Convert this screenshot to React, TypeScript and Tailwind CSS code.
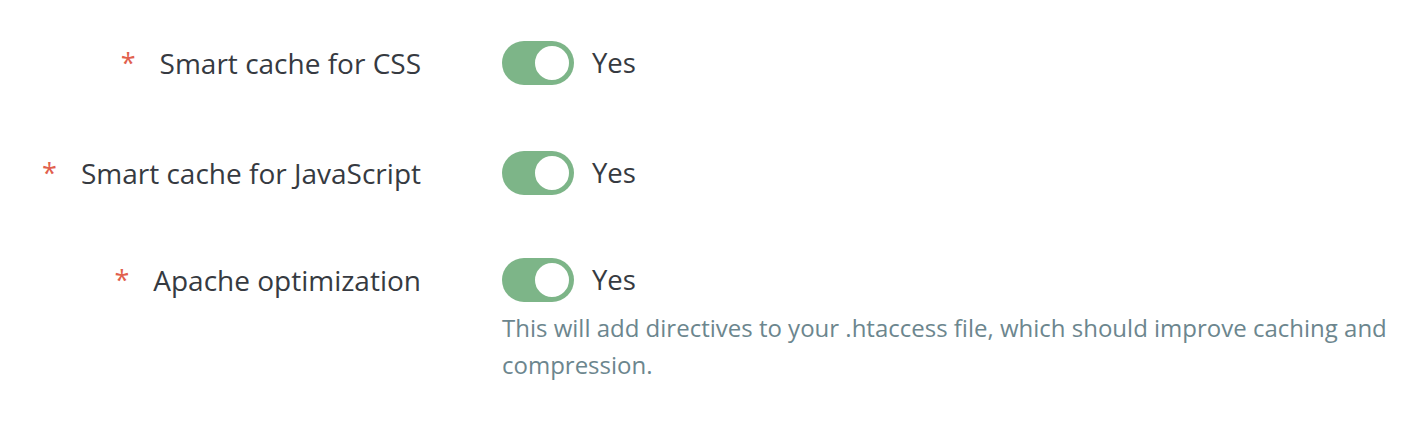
import React from 'react';

const rows = [
  { label: 'Smart cache for CSS', mb: 'mb-[66px]' },
  { label: 'Smart cache for JavaScript', mb: 'mb-[63px]' },
  {
    label: 'Apache optimization',
    mb: '',
    help: 'This will add directives to your .htaccess file, which should improve caching and compression.',
  },
];

const Toggle: React.FC = () => (
  <div className="relative w-[72px] h-[44px] rounded-full bg-[#7db588] shrink-0">
    <div className="absolute right-[2px] top-[2px] w-[40px] h-[40px] rounded-full bg-white border-[3px] border-[#7db588]" />
  </div>
);

export default function App() {
  return (
    <div
      className="w-[1424px] h-[424px] bg-white pt-[41px]"
      style={{ fontFamily: '"Open Sans", "Liberation Sans", sans-serif' }}
    >
      {rows.map((row) => (
        <div key={row.label} className={`grid grid-cols-[421px_1fr] gap-x-[81px] ${row.mb}`}>
          <div className="flex items-center justify-end h-[44px]">
            <span className="text-[#e1604d] text-[27px] mr-[24px] leading-none mt-[-2px]">*</span>
            <span className="text-[#363a41] text-[28px] leading-none">{row.label}</span>
          </div>
          <div>
            <div className="flex items-center h-[44px]">
              <Toggle />
              <span className="ml-[18px] text-[#363a41] text-[27.5px] leading-none">Yes</span>
            </div>
            {row.help && (
              <p className="mt-[7px] w-[900px] text-[24px] leading-[37px] text-[#6c868e]">{row.help}</p>
            )}
          </div>
        </div>
      ))}
    </div>
  );
}
